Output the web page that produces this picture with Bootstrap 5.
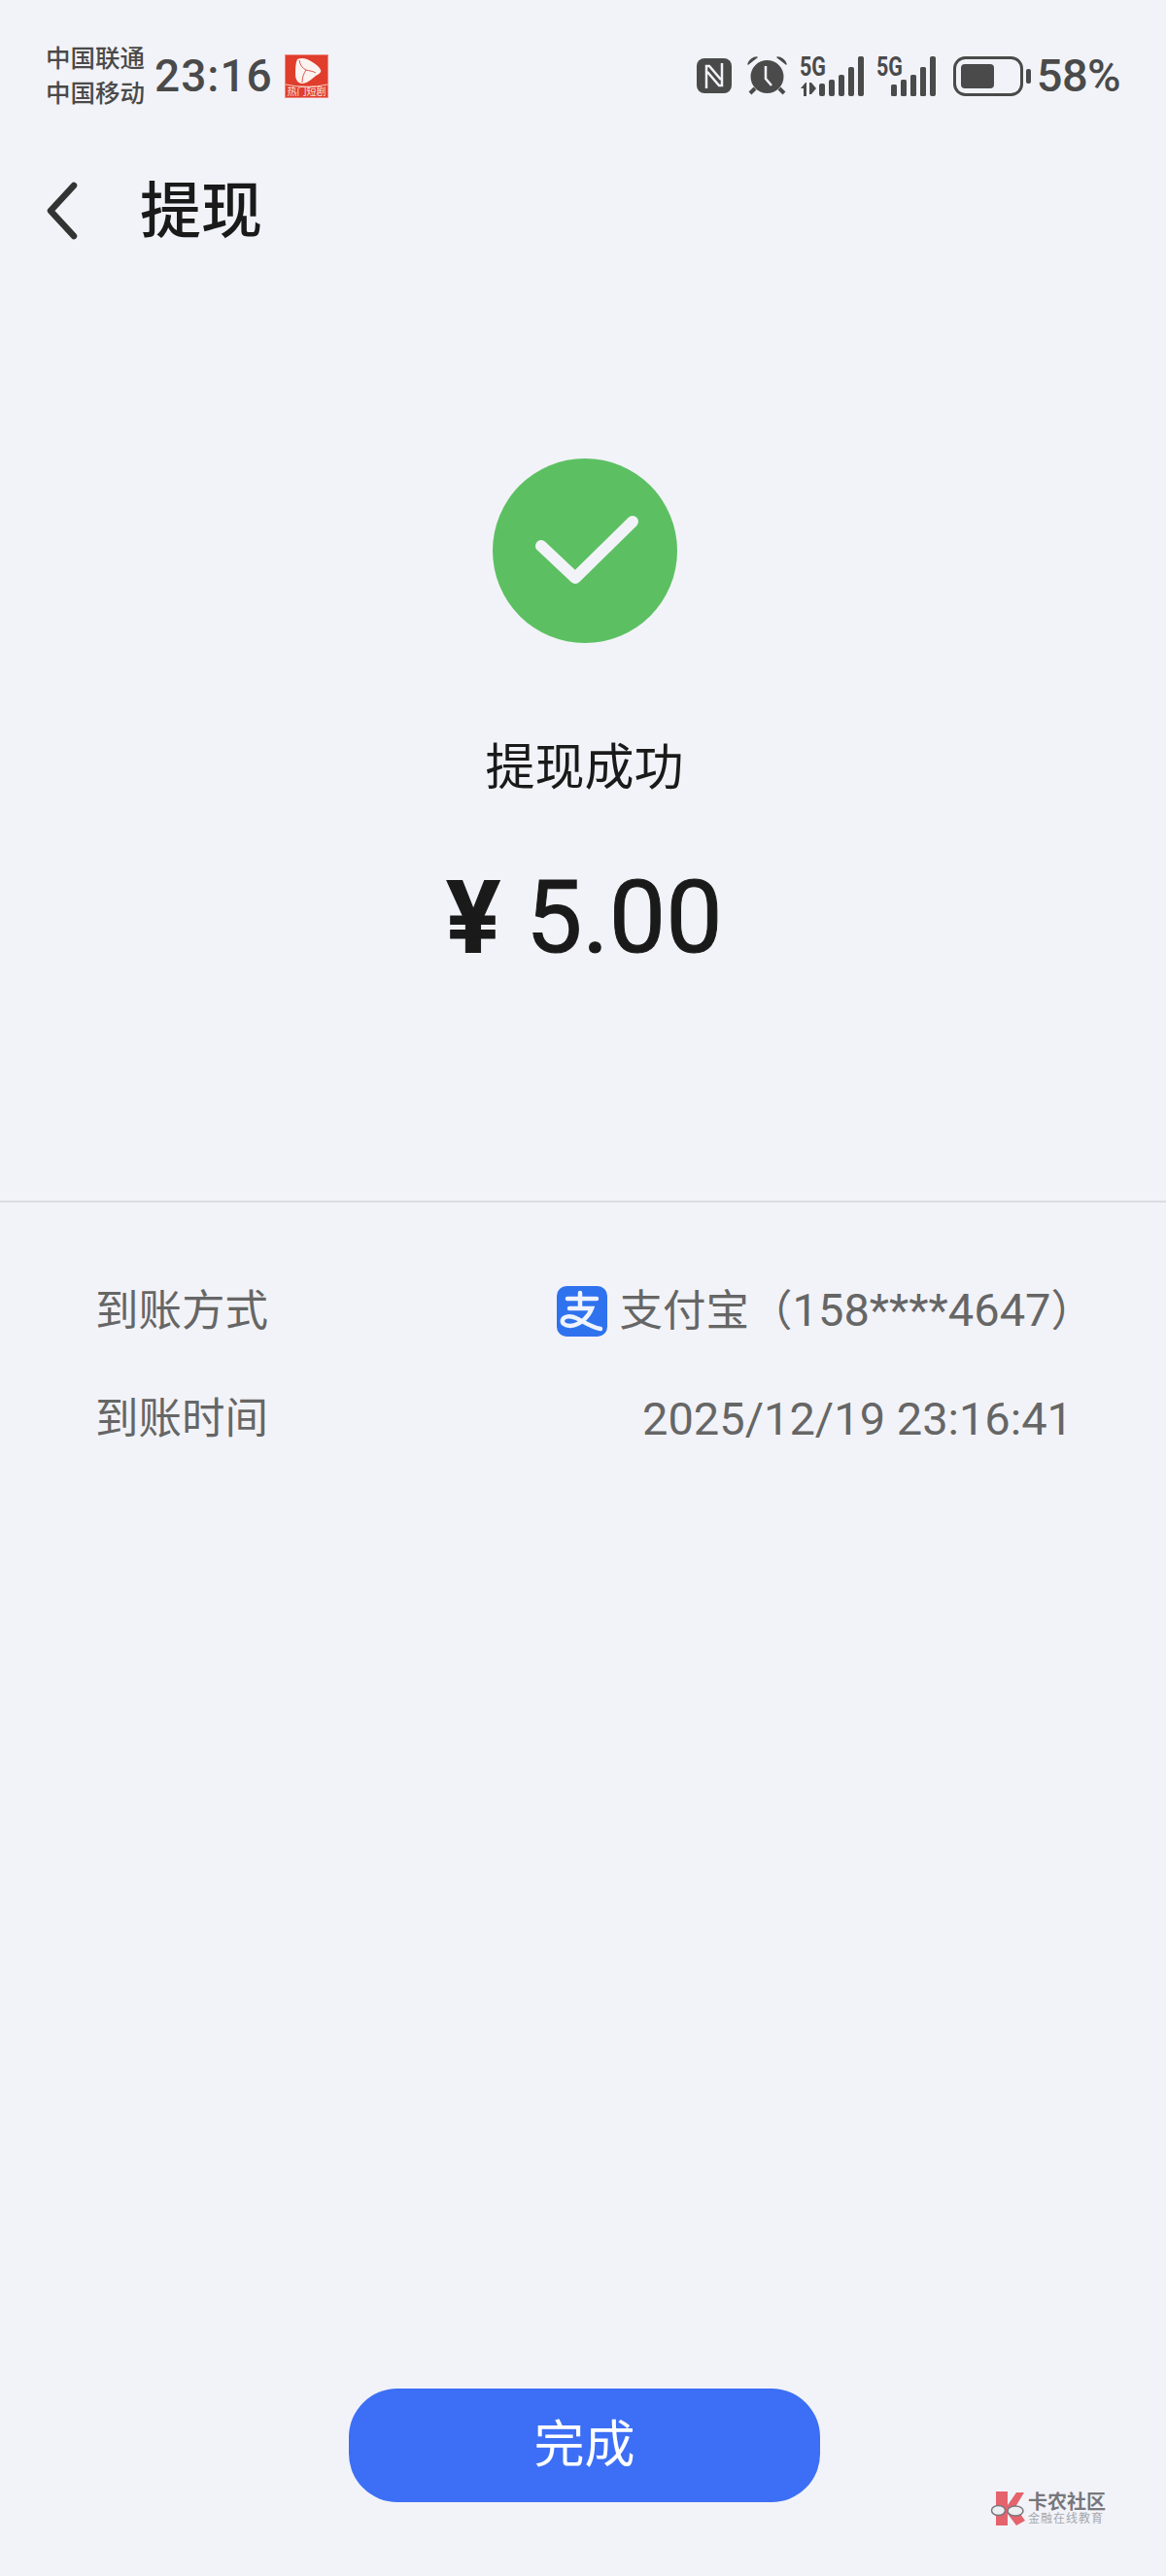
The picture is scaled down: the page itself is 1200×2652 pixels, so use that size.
<!DOCTYPE html>
<html lang="zh-CN">
<head>
    <meta charset="UTF-8">
    <meta name="viewport" content="width=device-width, initial-scale=1.0">
    <title>提现</title>
    <link rel="stylesheet" href="https://cdn.jsdelivr.net/npm/bootstrap@5.3.3/dist/css/bootstrap.min.css">
    <style>
        html, body { margin: 0; background: #f2f3f8; }
        body { font-family: Roboto, "Noto Sans CJK SC", sans-serif; color: #1a1a1a; }
        svg { overflow: visible; }
        .page-wrap { height: 2652px; width: 1200px; overflow: hidden; }
        .status-row { padding: 42px 47px 0 47px; height: 114px; color: #4a4a4a; }
        .carrier-text { font-size: 25.5px; line-height: 36px; font-weight: 500; width: 102px; white-space: nowrap; }
        .clock-text { font-size: 46px; line-height: 72px; font-weight: 500; margin-left: 10px; letter-spacing: 1px; }
        .app-badge { margin-left: 12px; display: block; }
        .pct-text { font-size: 47px; line-height: 72px; font-weight: 500; margin-left: 6px; letter-spacing: -.6px; }
        .title-row { margin-top: 73px; padding-left: 48px; height: 60px; gap: 65px; }
        .title-text { font-size: 63px; line-height: 60px; font-weight: 500; margin-top: 2px; }
        .result-col { padding-left: 3px; margin-top: -1px; }
        .ok-circle { margin-top: 226px; display: block; }
        .ok-text { margin-top: 99px; font-size: 51px; line-height: 60px; }
        .money-text { margin-top: 64px; font-size: 104px; line-height: 120px; font-weight: 400; -webkit-text-stroke: 1px #1a1a1a; }
        .yen-mark { font-weight: 700; }
        .split-line { margin-top: 231px; height: 2px; background: #dcdde3; }
        .info-list { margin-top: 81px; padding: 0 96px 0 98px; color: #666; font-size: 44.5px; line-height: 60px; gap: 51px; }
        .pay-name { gap: 13px; margin-right: -22px; }
        .num-part { font-size: 47px; }
        .footer-zone { margin-top: auto; padding: 0 0 76px 3px; }
        .done-btn { width: 485px; height: 117px; border-radius: 50px; border: 0; background: #3c6ff5; color: #fff; font-size: 52px; line-height: 117px; padding: 0; }
        .mark-logo { position: absolute; left: 1020px; top: 106px; gap: 4px; color: #77777d; }
        .mark-title { font-size: 20px; line-height: 20px; font-weight: 700; white-space: nowrap; }
        .mark-sub { font-size: 12px; line-height: 14px; color: #a6a6ac; white-space: nowrap; letter-spacing: 1px; }
    </style>
</head>
<body>
<div class="page-wrap d-flex flex-column">

    <!-- status bar -->
    <div class="status-row d-flex justify-content-between align-items-center">
        <div class="d-flex align-items-center">
            <div class="carrier-text">中国联通<br>中国移动</div>
            <div class="clock-text">23:16</div>
            <svg class="app-badge" width="45" height="45" viewBox="0 0 45 45">
                <rect x=".5" y=".5" width="44" height="44" fill="#e03d2d" stroke="#f08a7e"/>
                <path d="M13 5c5-2 9-1 14 2 5 3 9 6 10 9 1 2-1 4-5 6-5 4-9 8-14 8-4 0-7-4-7-9 0-6 0-12 2-16z" fill="#fbf3f0"/>
                <path d="M15 6c1 5 3 8 7 10 3 1 7 1 10 3M22 16c-2 3-4 7-4 13" fill="none" stroke="#d9594d" stroke-width="1"/>
                <path d="M1 31c14 3 29 3 43 0" fill="none" stroke="#f7c9c0" stroke-width="1.2"/>
                <text x="22.5" y="42" text-anchor="middle" font-size="10" fill="#fbe3df">热门短剧</text>
            </svg>
        </div>
        <div class="d-flex align-items-center">
            <!-- nfc -->
            <svg width="36" height="36" viewBox="0 0 36 36">
                <rect width="36" height="36" rx="8" fill="#4a4a4a"/>
                <path d="M10 31V8h3l12 14M26 5v23h-3L11 14" fill="none" stroke="#f2f3f8" stroke-width="2.500"/>
            </svg>
            <!-- alarm -->
            <svg style="margin-left:16px" width="41" height="40" viewBox="0 0 41 40">
                <circle cx="20.500" cy="21" r="17" fill="#4a4a4a"/>
                <path d="M1 8c1-4 5-7 9-7zM40 8c-1-4-5-7-9-7z" fill="#4a4a4a" stroke="#4a4a4a" stroke-width="1.500" stroke-linejoin="round"/>
                <path d="M8 33l-5 5M33 33l5 5" stroke="#4a4a4a" stroke-width="4"/>
                <path d="M19 10v13l6 7" fill="none" stroke="#f2f3f8" stroke-width="2.500"/>
            </svg>
            <!-- 5G + signal, first sim -->
            <svg style="margin-left:13px" width="68" height="41" viewBox="0 0 68 41">
                <text x="0" y="20" font-family="Roboto, sans-serif" font-size="27" font-weight="700" fill="#4a4a4a" textLength="27" lengthAdjust="spacingAndGlyphs">5G</text>
                <path d="M1 33l5-6 1 0v14h-3v-8zM10 27h2l5 6-5 6h-2z" fill="#4a4a4a"/>
                <g fill="#4a4a4a">
                    <rect x="20" y="28" width="6" height="13" rx="2"/>
                    <rect x="30" y="24" width="6" height="17" rx="2"/>
                    <rect x="40" y="19" width="6" height="22" rx="2"/>
                    <rect x="50" y="11" width="6" height="30" rx="2"/>
                    <rect x="60" y="0" width="6" height="41" rx="2"/>
                </g>
            </svg>
            <!-- 5G + signal, second sim -->
            <svg style="margin-left:11px" width="62" height="41" viewBox="0 0 62 41">
                <text x="0" y="20" font-family="Roboto, sans-serif" font-size="27" font-weight="700" fill="#4a4a4a" textLength="27" lengthAdjust="spacingAndGlyphs">5G</text>
                <g fill="#4a4a4a">
                    <rect x="15" y="29" width="6" height="12" rx="1.500"/>
                    <rect x="25" y="24" width="6" height="17" rx="1.500"/>
                    <rect x="35" y="19" width="6" height="22" rx="1.500"/>
                    <rect x="45" y="11" width="6" height="30" rx="1.500"/>
                    <rect x="55" y="0" width="6" height="41" rx="2"/>
                </g>
            </svg>
            <!-- battery -->
            <svg style="margin-left:17px" width="80" height="41" viewBox="0 0 80 41">
                <rect x="1.500" y="1.500" width="69" height="38" rx="11" fill="none" stroke="#4a4a4a" stroke-width="3"/>
                <rect x="8" y="8" width="34" height="25" rx="4" fill="#4a4a4a"/>
                <rect x="75" y="13" width="5" height="15" rx="2" fill="#4a4a4a"/>
            </svg>
            <div class="pct-text">58%</div>
        </div>
    </div>

    <!-- title -->
    <div class="title-row d-flex align-items-center">
        <svg width="31" height="58" viewBox="0 0 31 58">
            <path d="M28 3L4 29l24 26" fill="none" stroke="#333" stroke-width="6.500" stroke-linecap="round" stroke-linejoin="round"/>
        </svg>
        <div class="title-text">提现</div>
    </div>

    <!-- result -->
    <div class="result-col d-flex flex-column align-items-center">
        <svg class="ok-circle" width="190" height="190" viewBox="0 0 190 190">
            <circle cx="95" cy="95" r="95" fill="#5cc062"/>
            <path d="M50 90l35 33 59-58" fill="none" stroke="#f2f3f8" stroke-width="12" stroke-linecap="round" stroke-linejoin="round"/>
        </svg>
        <div class="ok-text">提现成功</div>
        <div class="money-text"><span class="yen-mark">¥</span> 5.00</div>
    </div>

    <div class="split-line"></div>

    <!-- detail rows -->
    <div class="info-list d-flex flex-column">
        <div class="d-flex justify-content-between align-items-center">
            <span>到账方式</span>
            <span class="pay-name d-flex align-items-center">
                <svg width="52" height="52" viewBox="0 0 52 52">
                    <rect width="52" height="52" rx="10" fill="#2f72ee"/>
                    <path d="M11 13h30M24 7v16M13 23h23c-3 8-11 17-22 18-6 0-9-3-8-6 1-4 8-5 14-2 7 3 14 9 25 11" fill="none" stroke="#eef3fd" stroke-width="4.500" stroke-linecap="round"/>
                </svg>
                <span>支付宝（<span class="num-part">158****4647</span>）</span>
            </span>
        </div>
        <div class="d-flex justify-content-between align-items-center">
            <span>到账时间</span>
            <span class="num-part">2025/12/19 23:16:41</span>
        </div>
    </div>

    <!-- bottom button -->
    <div class="footer-zone position-relative d-flex justify-content-center">
        <button type="button" class="btn done-btn">完成</button>
        <div class="mark-logo d-flex align-items-center">
            <svg width="34" height="35" viewBox="0 0 34 35">
                <path d="M5 0h12v14L26 1h8l-9 15 10 14-9 5-9-12v12H5z" fill="#e5636d"/>
                <ellipse cx="7.500" cy="19.500" rx="7" ry="5" fill="#eceef2" stroke="#77777d" stroke-width="1.500"/>
                <ellipse cx="25" cy="20" rx="8" ry="5" fill="#eceef2" stroke="#77777d" stroke-width="1.500"/>
            </svg>
            <div>
                <div class="mark-title">卡农社区</div>
                <div class="mark-sub">金融在线教育</div>
            </div>
        </div>
    </div>
</div>
<script src="https://cdn.jsdelivr.net/npm/bootstrap@5.3.3/dist/js/bootstrap.bundle.min.js"></script>
</body>
</html>
